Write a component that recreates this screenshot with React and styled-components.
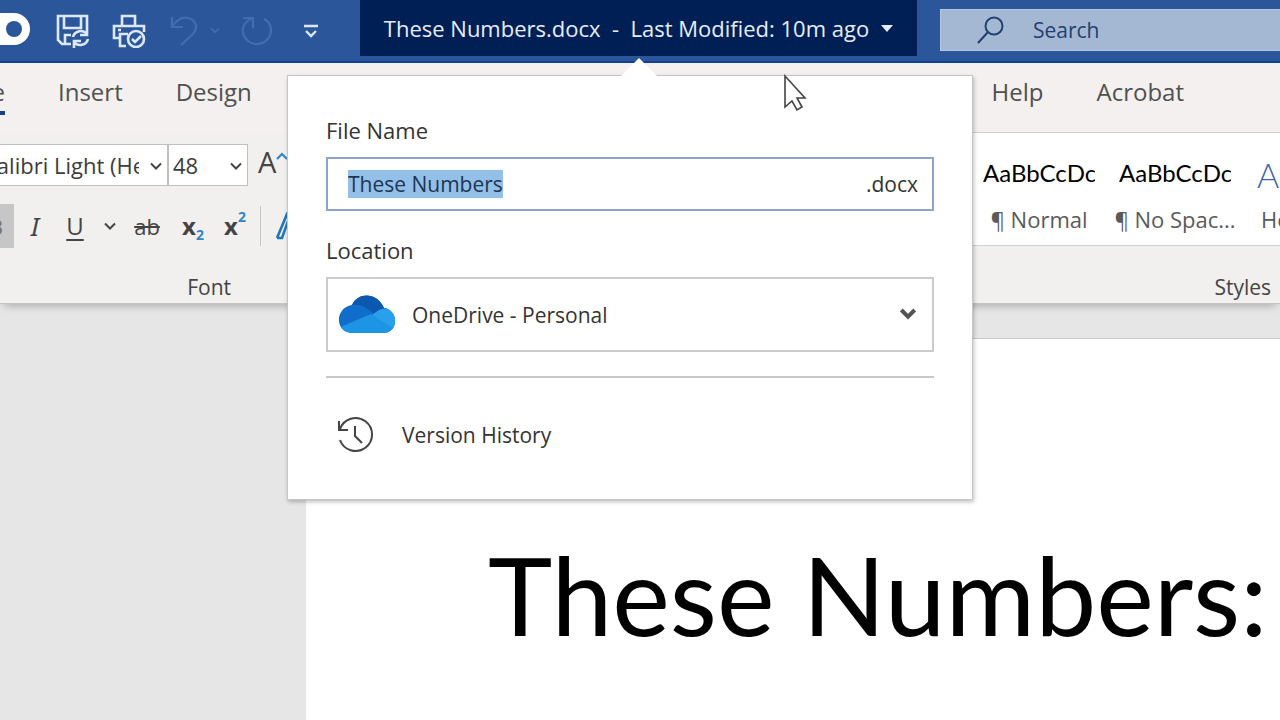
import React, { useRef, useEffect } from 'react';
import styled, { createGlobalStyle, css } from 'styled-components';

const ui = '"Open Sans", "Noto Sans", sans-serif';
const doc = 'Lato, "Open Sans", sans-serif';

const GlobalStyle = createGlobalStyle`
    * {
        box-sizing: border-box;
    }

    html, body, #root {
        height: 100%;
        margin: 0;
    }

    body {
        font-family: ${ui};
        font-size: 22px;
        line-height: 28px;
        color: #444;
        overflow: hidden;
    }

    button, input, select {
        margin: 0;
        padding: 0;
        border: 0;
        border-radius: 0;
        background: none;
        font: inherit;
        color: inherit;
        outline: none;
    }

    svg {
        display: block;
        flex: none;
    }
`;

const Shell = styled.div`
    display: flex;
    flex-direction: column;
    height: 100%;
    overflow: hidden;
    background: #e6e6e6;
`;

/* title bar */

const TitleBar = styled.header`
    display: flex;
    align-items: flex-start;
    height: 63px;
    flex: none;
    background: #2b579a;
    border-bottom: 2px solid #124191;
    color: #fff;
`;

const QuickAccess = styled.div`
    display: flex;
    align-items: center;
    width: 360px;
    height: 62px;
    flex: none;
`;

const Toggle = styled.button`
    display: flex;
    align-items: center;
    justify-content: flex-end;
    width: 30px;
    height: 32px;
    margin: 0 16px 4px 0;
    padding-right: 8px;
    border-radius: 0 16px 16px 0;
    background: #fff;

    &::after {
        content: '';
        width: 16px;
        height: 16px;
        border-radius: 50%;
        background: #2b579a;
    }
`;

const QuickButton = styled.button`
    display: flex;
    align-items: center;
    justify-content: center;
    gap: 12px;
    width: ${props => props.$width}px;
    height: 40px;
    color: ${props => (props.$dim ? '#426db3' : '#dbe8ff')};
`;

const FileMenu = styled.div`
    position: relative;
    flex: 0 0 557px;
`;

const FileButton = styled.button`
    display: flex;
    align-items: center;
    justify-content: center;
    gap: 12px;
    width: 100%;
    height: 56px;
    background: #001f54;
    color: #e6edfa;
    white-space: pre;
`;

const SearchBox = styled.label`
    display: flex;
    align-items: center;
    gap: 28px;
    flex: 1;
    height: 42px;
    margin: 9px 0 0 23px;
    padding-left: 36px;
    background: #a5b8d3;
    border: 1px solid #b4c6e2;
    border-right: 0;
    font-size: 21px;
    color: #233f70;
`;

const SearchInput = styled.input`
    width: 100%;
    min-width: 0;

    &::placeholder {
        color: #233f70;
        opacity: 1;
    }
`;

/* ribbon */

const Tabs = styled.nav`
    display: flex;
    justify-content: space-between;
    height: 69px;
    flex: none;
    padding: 10px 96px 0 0;
    background: #f3f0ef;
    font-size: 24px;
`;

const TabGroup = styled.div`
    display: flex;
    gap: 53px;
`;

const Tab = styled.a`
    display: flex;
    height: 42px;
    padding-top: 5px;
    color: #505050;
    text-decoration: none;

    ${props =>
        props.$active &&
        css`
            justify-content: flex-end;
            width: 5px;
            overflow: hidden;
            border-bottom: 4px solid #1b3f86;
        `}
`;

const Ribbon = styled.section`
    display: flex;
    justify-content: space-between;
    height: 172px;
    flex: none;
    background: #f1f0ef;
    border-bottom: 1px solid #c4c4c4;
    box-shadow: 0 6px 8px -4px rgba(0, 0, 0, 0.25);
    z-index: 1;
`;

const FontGroup = styled.div`
    display: flex;
    flex-direction: column;
    width: 287px;
    padding-top: 12px;
    overflow: hidden;
`;

const FontRow = styled.div`
    display: flex;
    align-items: center;
    height: ${props => props.$height}px;
    margin-bottom: ${props => props.$gap}px;
`;

const SelectWrap = styled.div`
    position: relative;
    display: flex;
    justify-content: flex-end;
    width: ${props => props.$width}px;
    overflow: hidden;
    flex: none;

    svg {
        position: absolute;
        right: 6px;
        top: 18px;
        pointer-events: none;
    }
`;

const Select = styled.select`
    appearance: none;
    flex: none;
    width: ${props => props.$width}px;
    height: 42px;
    padding: 0 28px 0 4px;
    border: 1px solid #c0c0c0;
    background: #fff;
    color: #3c3c3c;
`;

const GrowButton = styled.button`
    display: flex;
    height: 34px;
    margin-left: 10px;
    font-size: 29px;
    color: #444;
`;

const ToolButton = styled.button`
    display: flex;
    align-items: center;
    justify-content: center;
    flex: none;
    width: ${props => props.$width}px;
    height: 44px;
    overflow: hidden;
    color: #444;
    background: ${props => (props.$pressed ? '#c6c6c6' : 'none')};

    em {
        font-family: "Noto Sans", serif;
        font-size: 26px;
    }

    u {
        font-size: 24px;
        text-decoration-thickness: 2px;
        text-underline-offset: 4px;
    }
`;

const Bold = styled.b`
    width: 100%;
    display: flex;
    justify-content: flex-end;
    padding-right: 11px;
    color: #777;
`;

const Script = styled.span`
    display: flex;
    align-items: center;
    font-size: 24px;
    font-weight: 700;

    sub, sup {
        font-size: 14px;
        line-height: 14px;
        color: #2e86c8;
    }

    sub {
        padding-top: 18px;
    }

    sup {
        padding-bottom: 18px;
    }
`;

const Divider = styled.div`
    flex: none;
    width: 1px;
    height: 40px;
    margin: 0 14px 0 8px;
    background: #c8c8c8;
`;

const GroupLabel = styled.div`
    font-size: 21px;
    padding-right: ${props => props.$right}px;
    text-align: right;
    color: #444;
`;

const StylesGroup = styled.div`
    width: 309px;
    overflow: hidden;
`;

const Gallery = styled.div`
    display: flex;
    height: 114px;
    margin-bottom: 27px;
    background: #fff;
    border: 1px solid #d0d0d0;
    border-width: 1px 0;
`;

const StyleItem = styled.button`
    display: flex;
    flex-direction: column;
    align-items: ${props => (props.$heading ? 'flex-start' : 'center')};
    flex: none;
    width: 136px;
    padding: 26px 12px 0;
    color: #5a5a5a;
    white-space: nowrap;
`;

const Preview = styled.span`
    width: 112px;
    height: 32px;
    margin-bottom: 14px;
    overflow: hidden;
    text-align: left;
    font-family: ${doc};
    font-size: 24px;
    color: #000;

    ${props =>
        props.$heading &&
        css`
            padding-left: 2px;
            font-size: 34px;
            font-weight: 300;
            line-height: 32px;
            color: #3f66a8;
        `}
`;

const StyleName = styled.span`
    padding-left: ${props => (props.$heading ? 6 : 0)}px;
`;

/* document */

const Canvas = styled.main`
    display: flex;
    flex: 1;
    padding: 34px 0 0 306px;
`;

const Page = styled.article`
    flex: 1;
    padding: 190px 0 0 182px;
    background: #fff;
    border-top: 1px solid #c8c8c8;
    overflow: hidden;
`;

const Heading = styled.h1`
    margin: 0;
    font-family: ${doc};
    font-size: 109px;
    font-weight: 400;
    line-height: 130px;
    white-space: nowrap;
    color: #000;
`;

/* file popover */

const Popover = styled.form`
    position: absolute;
    z-index: 5;
    top: 75px;
    left: -73px;
    width: 686px;
    padding: 40px 38px 45px;
    background: #fff;
    border: 1px solid #c6c6c6;
    box-shadow: 1px 2px 4px rgba(0, 0, 0, 0.25);
    font-size: 21px;
    color: #333;
`;

const Arrow = styled.svg`
    position: absolute;
    top: -18px;
    left: 332px;
`;

const Label = styled.label`
    display: block;
    margin-bottom: 13px;
    font-size: 22px;
`;

const NameField = styled.div`
    display: flex;
    align-items: center;
    height: 54px;
    margin-bottom: 25px;
    padding: 0 14px 0 20px;
    border: 2px solid #8ba4c8;
`;

const NameInput = styled.input`
    flex: 1;
    min-width: 0;
    height: 28px;

    &::selection {
        background: #92c0e8;
        color: #1f3550;
    }
`;

const LocationField = styled.div`
    position: relative;
    height: 75px;
    margin-bottom: 24px;

    svg {
        position: absolute;
        pointer-events: none;
    }

    svg:first-child {
        top: 17px;
        left: 12px;
    }

    svg:last-child {
        top: 31px;
        right: 18px;
        color: #555;
    }
`;

const LocationSelect = styled.select`
    appearance: none;
    width: 100%;
    height: 100%;
    padding-left: 84px;
    border: 2px solid #cccccc;
`;

const Rule = styled.hr`
    height: 2px;
    margin: 0 0 38px;
    border: 0;
    background: #c8c8c8;
`;

const HistoryButton = styled.button`
    display: flex;
    align-items: center;
    gap: 27px;
    padding-left: 11px;
`;

const Pointer = styled.svg`
    position: fixed;
    z-index: 10;
    top: 73px;
    left: 782px;
`;

const Chevron = ({ size = 12, stroke = 2 }) => (
    <svg width={size} height={size * 0.75} viewBox="0 0 12 9" fill="none" stroke="currentColor" strokeWidth={stroke}>
        <path d="M1 1.5l5 5 5-5" />
    </svg>
);

const SaveIcon = () => (
    <svg width="34" height="34" viewBox="0 0 34 34" fill="none" stroke="currentColor" strokeWidth="2.6">
        <path d="M15 30H6l-4-4V2h29v12" />
        <path d="M8 2v12h17V2" />
        <path d="M9 30v-9h6" />
        <path d="M17 23a8 8 0 0 1 14-3M31 14v7h-7M32 25a8 8 0 0 1-14 3M18 34v-7h7" />
    </svg>
);

const PrintIcon = () => (
    <svg width="34" height="34" viewBox="0 0 34 34" fill="none" stroke="currentColor" strokeWidth="2.6">
        <path d="M10 12V2h13v10" />
        <path d="M8 24H2V12h30v6" />
        <path d="M14 32H8V20h8M6 16h3" />
        <circle cx="24" cy="25" r="8" />
        <path d="M20 25l3 3 6-6" />
    </svg>
);

const UndoIcon = () => (
    <svg width="28" height="32" viewBox="0 0 28 32" fill="none" stroke="currentColor" strokeWidth="2.2">
        <path d="M2 2v10h11" />
        <path d="M2 12C7 4 13 2 18 3c9 2 10 11 5 16L11 30" />
    </svg>
);

const RedoIcon = () => (
    <svg width="34" height="32" viewBox="0 0 34 32" fill="none" stroke="currentColor" strokeWidth="2.2">
        <path d="M3 3h10v10" />
        <path d="M13 3C5 6 2 12 3 18c2 7 8 12 15 11 8-1 13-7 13-14 0-5-3-9-7-11" />
    </svg>
);

const CustomizeIcon = () => (
    <svg width="16" height="14" viewBox="0 0 16 14" fill="none" stroke="currentColor" strokeWidth="2.4">
        <path d="M1 2h14M3 7l5 5 5-5" />
    </svg>
);

const SearchIcon = () => (
    <svg width="28" height="28" viewBox="0 0 28 28" fill="none" stroke="currentColor" strokeWidth="2">
        <circle cx="17" cy="10" r="8.5" />
        <path d="M11 16L1 27" />
    </svg>
);

const EffectsIcon = () => (
    <svg width="26" height="28" viewBox="0 0 26 28" fill="none" stroke="#2176b8" strokeWidth="2.6">
        <path d="M2 26L12 2l10 24M2 26h5l5-14 5 14" />
    </svg>
);

const CloudIcon = () => (
    <svg width="58" height="40" viewBox="0 0 58 40">
        <defs>
            <clipPath id="cloud">
                <path d="M14 39C-3 39-4 14 14 11C20-2 39-2 46 14C61 16 61 39 45 39z" />
            </clipPath>
        </defs>
        <g clipPath="url(#cloud)">
            <rect width="58" height="40" fill="#0f6ecb" />
            <path d="M14 11c7-1 12 1 17 5l9 6 10-8V0H14z" fill="#0b58ae" />
            <path d="M30 24l8-6c4-3 8-5 20-3v25H42z" fill="#2ba0ea" />
            <path d="M0 34l33-14 22 14v6H0z" fill="#1e95e4" />
        </g>
    </svg>
);

const HistoryIcon = () => (
    <svg width="38" height="38" viewBox="0 0 38 38" fill="none" stroke="#444" strokeWidth="2">
        <path d="M3 13A16.500 16.500 0 1 1 3 24" />
        <path d="M2 5v9h9" />
        <path d="M18 10v10l7 7" />
    </svg>
);

const FilePopover = () => {
    const nameInput = useRef(null);

    useEffect(() => {
        nameInput.current.focus();
        nameInput.current.select();
    }, []);

    return (
        <Popover onSubmit={e => e.preventDefault()}>
            <Arrow width="38" height="19" viewBox="0 0 38 19">
                <path d="M0 19L19 0l19 19z" fill="#fff" />
            </Arrow>
            <Label htmlFor="name">File Name</Label>
            <NameField>
                <NameInput id="name" ref={nameInput} defaultValue="These Numbers" autoComplete="off" spellCheck={false} />
                <span>.docx</span>
            </NameField>
            <Label htmlFor="location">Location</Label>
            <LocationField>
                <CloudIcon />
                <LocationSelect id="location">
                    <option>OneDrive - Personal</option>
                </LocationSelect>
                <Chevron size={16} stroke={3} />
            </LocationField>
            <Rule />
            <HistoryButton type="button">
                <HistoryIcon />
                Version History
            </HistoryButton>
        </Popover>
    );
};

const styleItems = [
    { preview: 'AaBbCcDc', name: '¶ Normal' },
    { preview: 'AaBbCcDc', name: '¶ No Spac...' },
    { preview: 'AaBbCc', name: 'Heading 1', heading: true }
];

const App = () => {
    return (
        <Shell>
            <GlobalStyle />
            <TitleBar>
                <QuickAccess>
                    <Toggle aria-label="AutoSave" />
                    <QuickButton $width={54} aria-label="Save"><SaveIcon /></QuickButton>
                    <QuickButton $width={58} aria-label="Print"><PrintIcon /></QuickButton>
                    <QuickButton $width={74} $dim aria-label="Undo">
                        <UndoIcon />
                        <Chevron size={10} />
                    </QuickButton>
                    <QuickButton $width={50} $dim aria-label="Redo"><RedoIcon /></QuickButton>
                    <QuickButton $width={58} aria-label="Customize"><CustomizeIcon /></QuickButton>
                </QuickAccess>
                <FileMenu>
                    <FileButton>
                        These Numbers.docx  -  Last Modified: 10m ago
                        <svg width="12" height="7" viewBox="0 0 12 7"><path d="M0 0h12L6 7z" fill="currentColor" /></svg>
                    </FileButton>
                    <FilePopover />
                </FileMenu>
                <SearchBox>
                    <SearchIcon />
                    <SearchInput placeholder="Search" />
                </SearchBox>
            </TitleBar>
            <Tabs>
                <TabGroup>
                    <Tab href="#home" $active>Home</Tab>
                    <Tab href="#insert">Insert</Tab>
                    <Tab href="#design">Design</Tab>
                </TabGroup>
                <TabGroup>
                    <Tab href="#help">Help</Tab>
                    <Tab href="#acrobat">Acrobat</Tab>
                </TabGroup>
            </Tabs>
            <Ribbon>
                <FontGroup>
                    <FontRow $height={42} $gap={18}>
                        <SelectWrap $width={168}>
                            <Select $width={190} aria-label="Font">
                                <option>Calibri Light (Headings)</option>
                            </Select>
                            <Chevron />
                        </SelectWrap>
                        <SelectWrap $width={80}>
                            <Select $width={80} aria-label="Font size">
                                <option>48</option>
                            </Select>
                            <Chevron />
                        </SelectWrap>
                        <GrowButton aria-label="Grow font">
                            A
                            <svg width="12" height="12" viewBox="0 0 12 12" fill="none" stroke="#2e86c8" strokeWidth="2.2"><path d="M1 11l5-5 5 5" /></svg>
                        </GrowButton>
                    </FontRow>
                    <FontRow $height={44} $gap={25}>
                        <ToolButton $width={14} $pressed><Bold>B</Bold></ToolButton>
                        <ToolButton $width={42}><em>I</em></ToolButton>
                        <ToolButton $width={38}><u>U</u></ToolButton>
                        <ToolButton $width={32} aria-label="Underline style"><Chevron /></ToolButton>
                        <ToolButton $width={42}><s>ab</s></ToolButton>
                        <ToolButton $width={50}><Script>x<sub>2</sub></Script></ToolButton>
                        <ToolButton $width={34}><Script>x<sup>2</sup></Script></ToolButton>
                        <Divider />
                        <EffectsIcon />
                    </FontRow>
                    <GroupLabel $right={56}>Font</GroupLabel>
                </FontGroup>
                <StylesGroup>
                    <Gallery>
                        {styleItems.map(item => (
                            <StyleItem key={item.name} $heading={item.heading}>
                                <Preview $heading={item.heading}>{item.preview}</Preview>
                                <StyleName $heading={item.heading}>{item.name}</StyleName>
                            </StyleItem>
                        ))}
                    </Gallery>
                    <GroupLabel $right={9}>Styles</GroupLabel>
                </StylesGroup>
            </Ribbon>
            <Canvas>
                <Page>
                    <Heading>These Numbers:</Heading>
                </Page>
            </Canvas>
            <Pointer width="26" height="40" viewBox="0 0 26 40">
                <path d="M3 3v31l7-6 5 9 5-3-5-9h8z" fill="#fff" stroke="#444" strokeWidth="1.6" />
            </Pointer>
        </Shell>
    );
};

export default App;
